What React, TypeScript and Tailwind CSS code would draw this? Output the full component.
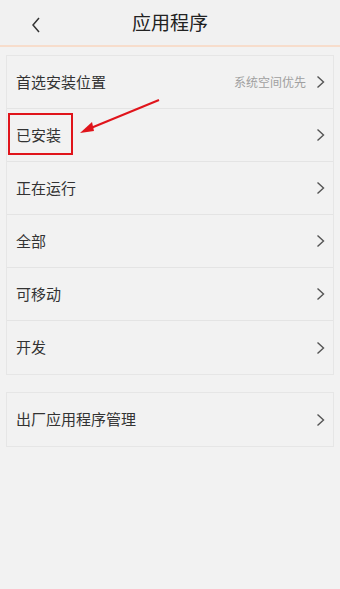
import React from "react";

const Chevron = ({ className = "" }: { className?: string }) => (
  <svg width="9" height="14" viewBox="0 0 9 14" className={className}>
    <path d="M1.5 1.5 L7.5 7 L1.5 12.5" fill="none" stroke="#555" strokeWidth="1.4" />
  </svg>
);

const Row = ({ label, right, last, boxed }: { label: string; right?: string; last?: boolean; boxed?: boolean }) => (
  <div className={`relative flex h-[53px] items-center justify-between pl-[9px] pr-[8px] ${last ? "" : "border-b border-[#e4e4e4]"}`}>
    <span className="text-[15px] text-[#333]">{label}</span>
    <div className="flex items-center gap-[10px]">
      {right && <span className="text-[12px] text-[#a0a0a0]">{right}</span>}
      <Chevron />
    </div>
    {boxed && (
      <div className="absolute left-[1px] top-[4px] h-[42px] w-[65px] border-[2px] border-[#e0141b]" />
    )}
  </div>
);

export default function App() {
  return (
    <div
      className="relative h-[589px] w-[340px] bg-[#f2f2f2]"
      style={{ fontFamily: '"Noto Sans CJK SC", "Noto Sans", sans-serif' }}
    >
      <div className="relative flex h-[47px] items-center justify-center border-b-[2px] border-[#f7ddcc] bg-[#f1f1f1]">
        <svg width="10" height="16" viewBox="0 0 10 16" className="absolute left-[31px] top-[17px]">
          <path d="M8 1 L2 8 L8 15" fill="none" stroke="#333" strokeWidth="1.5" />
        </svg>
        <span className="text-[19px] text-[#222]">应用程序</span>
      </div>
      <div className="px-[6px] pt-[8px]">
        <div className="border border-[#e6e6e6] bg-[#f2f2f2]">
          <Row label="首选安装位置" right="系统空间优先" />
          <Row label="已安装" boxed />
          <Row label="正在运行" />
          <Row label="全部" />
          <Row label="可移动" />
          <Row label="开发" last />
        </div>
        <div className="mt-[17px] border border-[#e6e6e6] bg-[#f2f2f2]">
          <Row label="出厂应用程序管理" last />
        </div>
      </div>
      <svg width="340" height="589" className="pointer-events-none absolute left-0 top-0">
        <line x1="159" y1="100" x2="86" y2="130" stroke="#e0141b" strokeWidth="2" />
        <path d="M80 133 L92 122 L94 131 Z" fill="#e0141b" />
      </svg>
    </div>
  );
}
